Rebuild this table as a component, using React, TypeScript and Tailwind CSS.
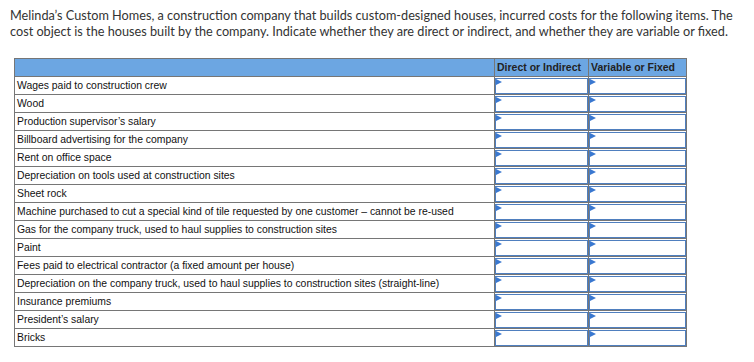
import React from "react";

const items = [
  "Wages paid to construction crew",
  "Wood",
  "Production supervisor\u2019s salary",
  "Billboard advertising for the company",
  "Rent on office space",
  "Depreciation on tools used at construction sites",
  "Sheet rock",
  "Machine purchased to cut a special kind of tile requested by one customer \u2013 cannot be re-used",
  "Gas for the company truck, used to haul supplies to construction sites",
  "Paint",
  "Fees paid to electrical contractor (a fixed amount per house)",
  "Depreciation on the company truck, used to haul supplies to construction sites (straight-line)",
  "Insurance premiums",
  "President\u2019s salary",
  "Bricks",
];

function InputCell() {
  return (
    <td className="border border-[#767676] p-0 h-[18px]">
      <div className="relative h-[16px] border border-[#4f7fbf] bg-white">
        <svg className="absolute left-0 top-0" width="6" height="7" viewBox="0 0 6 7">
          <polygon points="0,0 6,3 0,6" fill="#3a78d0" />
        </svg>
      </div>
    </td>
  );
}

export default function App() {
  return (
    <div className="bg-white w-[754px] h-[362px] overflow-hidden">
      <p
        className="pl-[10px] pt-[7px] pr-[6px] text-[12.7px] leading-[16px] text-[#333]"
        style={{ fontFamily: "Lato, 'Open Sans', sans-serif" }}
      >
        Melinda’s Custom Homes, a construction company that builds custom-designed houses, incurred costs for the following items. The cost object is the houses built by the company. Indicate whether they are direct or indirect, and whether they are variable or fixed.
      </p>
      <table
        className="ml-[14px] mt-[19px] border-collapse table-fixed text-[10.4px] text-[#111]"
        style={{ fontFamily: "'Liberation Sans', Arial, sans-serif" }}
      >
        <colgroup>
          <col className="w-[480px]" />
          <col className="w-[94px]" />
          <col className="w-[98px]" />
        </colgroup>
        <thead>
          <tr className="bg-[#6ca6e2]">
            <th className="border border-[#767676] h-[18px] p-0"></th>
            <th className="border border-[#767676] h-[18px] p-0 text-left pl-[2px] font-bold text-[10.5px] text-[#222]">Direct or Indirect</th>
            <th className="border border-[#767676] h-[18px] p-0 text-left pl-[2px] font-bold text-[10.5px] text-[#222]">Variable or Fixed</th>
          </tr>
        </thead>
        <tbody>
          {items.map((it) => (
            <tr key={it}>
              <td className="border border-[#767676] h-[18px] p-0 pl-[2px] whitespace-nowrap">{it}</td>
              <InputCell />
              <InputCell />
            </tr>
          ))}
        </tbody>
      </table>
    </div>
  );
}
